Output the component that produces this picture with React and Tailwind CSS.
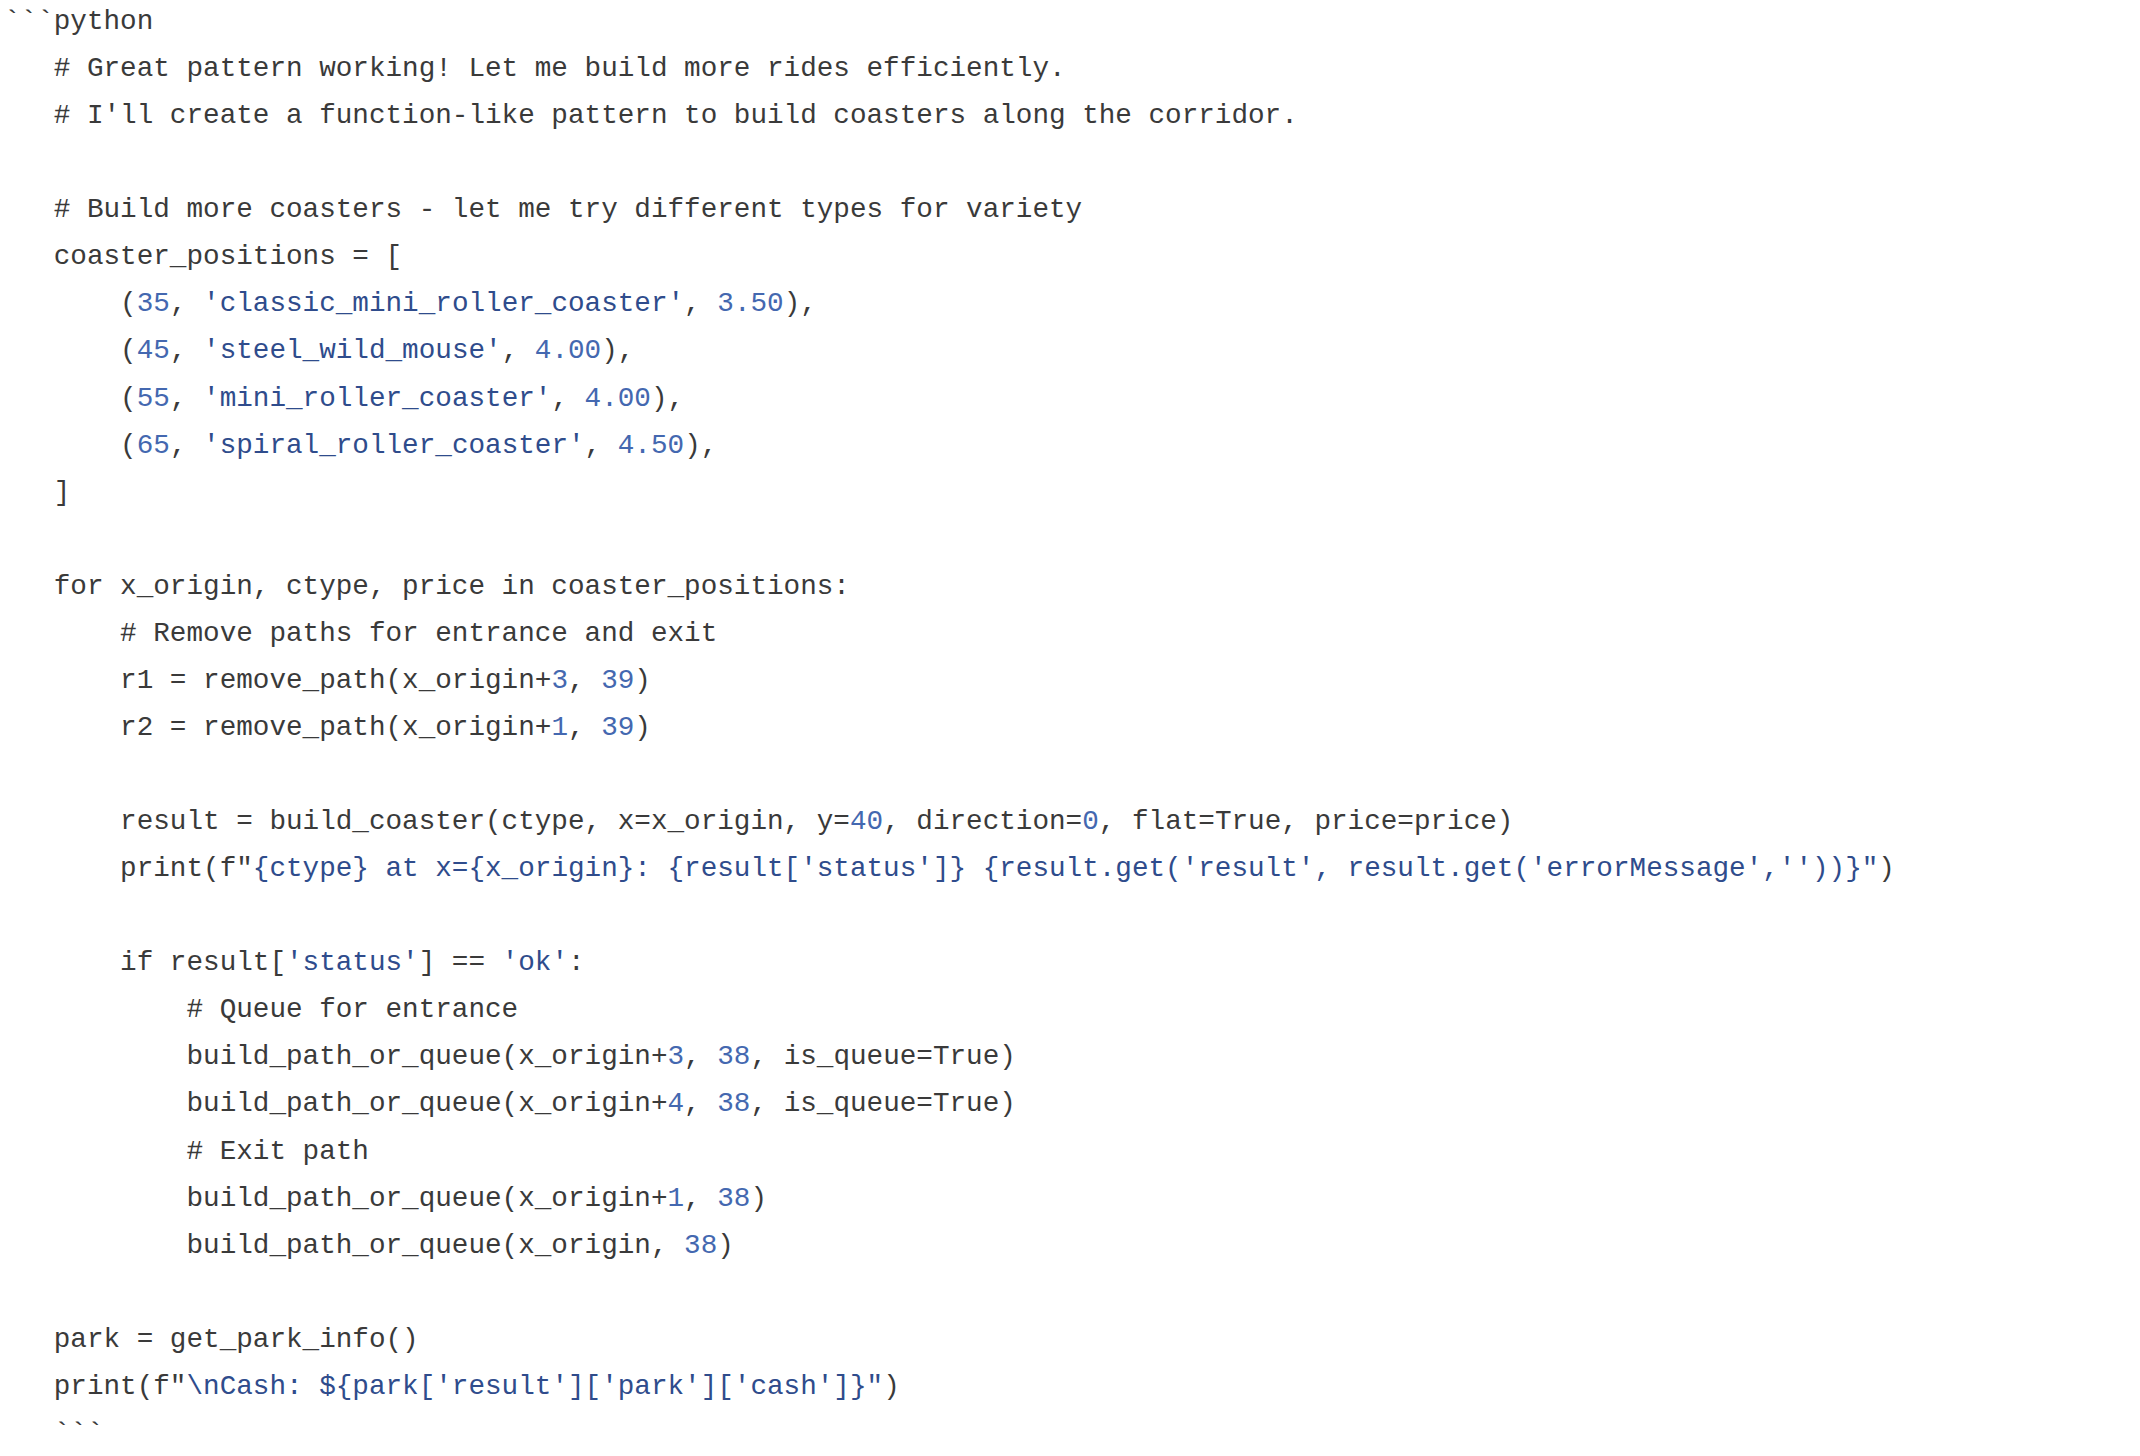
import React from 'react';

// token types: n = number, s = string, default = plain
const lines = [
  [['```python']],
  [['   # Great pattern working! Let me build more rides efficiently.']],
  [["   # I'll create a function-like pattern to build coasters along the corridor."]],
  [],
  [['   # Build more coasters - let me try different types for variety']],
  [['   coaster_positions = [']],
  [['       ('], ['35', 'n'], [', '], ["'classic_mini_roller_coaster'", 's'], [', '], ['3.50', 'n'], ['),']],
  [['       ('], ['45', 'n'], [', '], ["'steel_wild_mouse'", 's'], [', '], ['4.00', 'n'], ['),']],
  [['       ('], ['55', 'n'], [', '], ["'mini_roller_coaster'", 's'], [', '], ['4.00', 'n'], ['),']],
  [['       ('], ['65', 'n'], [', '], ["'spiral_roller_coaster'", 's'], [', '], ['4.50', 'n'], ['),']],
  [['   ]']],
  [],
  [['   for x_origin, ctype, price in coaster_positions:']],
  [['       # Remove paths for entrance and exit']],
  [['       r1 = remove_path(x_origin+'], ['3', 'n'], [', '], ['39', 'n'], [')']],
  [['       r2 = remove_path(x_origin+'], ['1', 'n'], [', '], ['39', 'n'], [')']],
  [],
  [
    ['       result = build_coaster(ctype, x=x_origin, y='],
    ['40', 'n'],
    [', direction='],
    ['0', 'n'],
    [', flat=True, price=price)'],
  ],
  [
    ['       print(f"'],
    ["{ctype} at x={x_origin}: {result['status']} {result.get('result', result.get('errorMessage',''))}\"", 's'],
    [')'],
  ],
  [],
  [['       if result['], ["'status'", 's'], ['] == '], ["'ok'", 's'], [':']],
  [['           # Queue for entrance']],
  [['           build_path_or_queue(x_origin+'], ['3', 'n'], [', '], ['38', 'n'], [', is_queue=True)']],
  [['           build_path_or_queue(x_origin+'], ['4', 'n'], [', '], ['38', 'n'], [', is_queue=True)']],
  [['           # Exit path']],
  [['           build_path_or_queue(x_origin+'], ['1', 'n'], [', '], ['38', 'n'], [')']],
  [['           build_path_or_queue(x_origin, '], ['38', 'n'], [')']],
  [],
  [['   park = get_park_info()']],
  [['   print(f"'], ["\\nCash: ${park['result']['park']['cash']}\"", 's'], [')']],
  [['   ```']],
];

const tokenClass = {
  n: 'text-[#4468b0]',
  s: 'text-[#2f4c8c]',
};

const App = () => {
  return (
    <div className="min-h-screen bg-white overflow-hidden">
      <div className="-mt-[2px] pl-[4px] font-['Courier_New','Liberation_Mono',monospace] text-[27.65px] leading-[47.07px] text-[#3a3a3a] whitespace-pre">
        {lines.map((line, i) => (
          <div key={i} className="h-[47.07px]">
            {line.map(([text, type], j) => (
              <span key={j} className={tokenClass[type] || ''}>
                {text}
              </span>
            ))}
          </div>
        ))}
      </div>
    </div>
  );
};

export default App;
